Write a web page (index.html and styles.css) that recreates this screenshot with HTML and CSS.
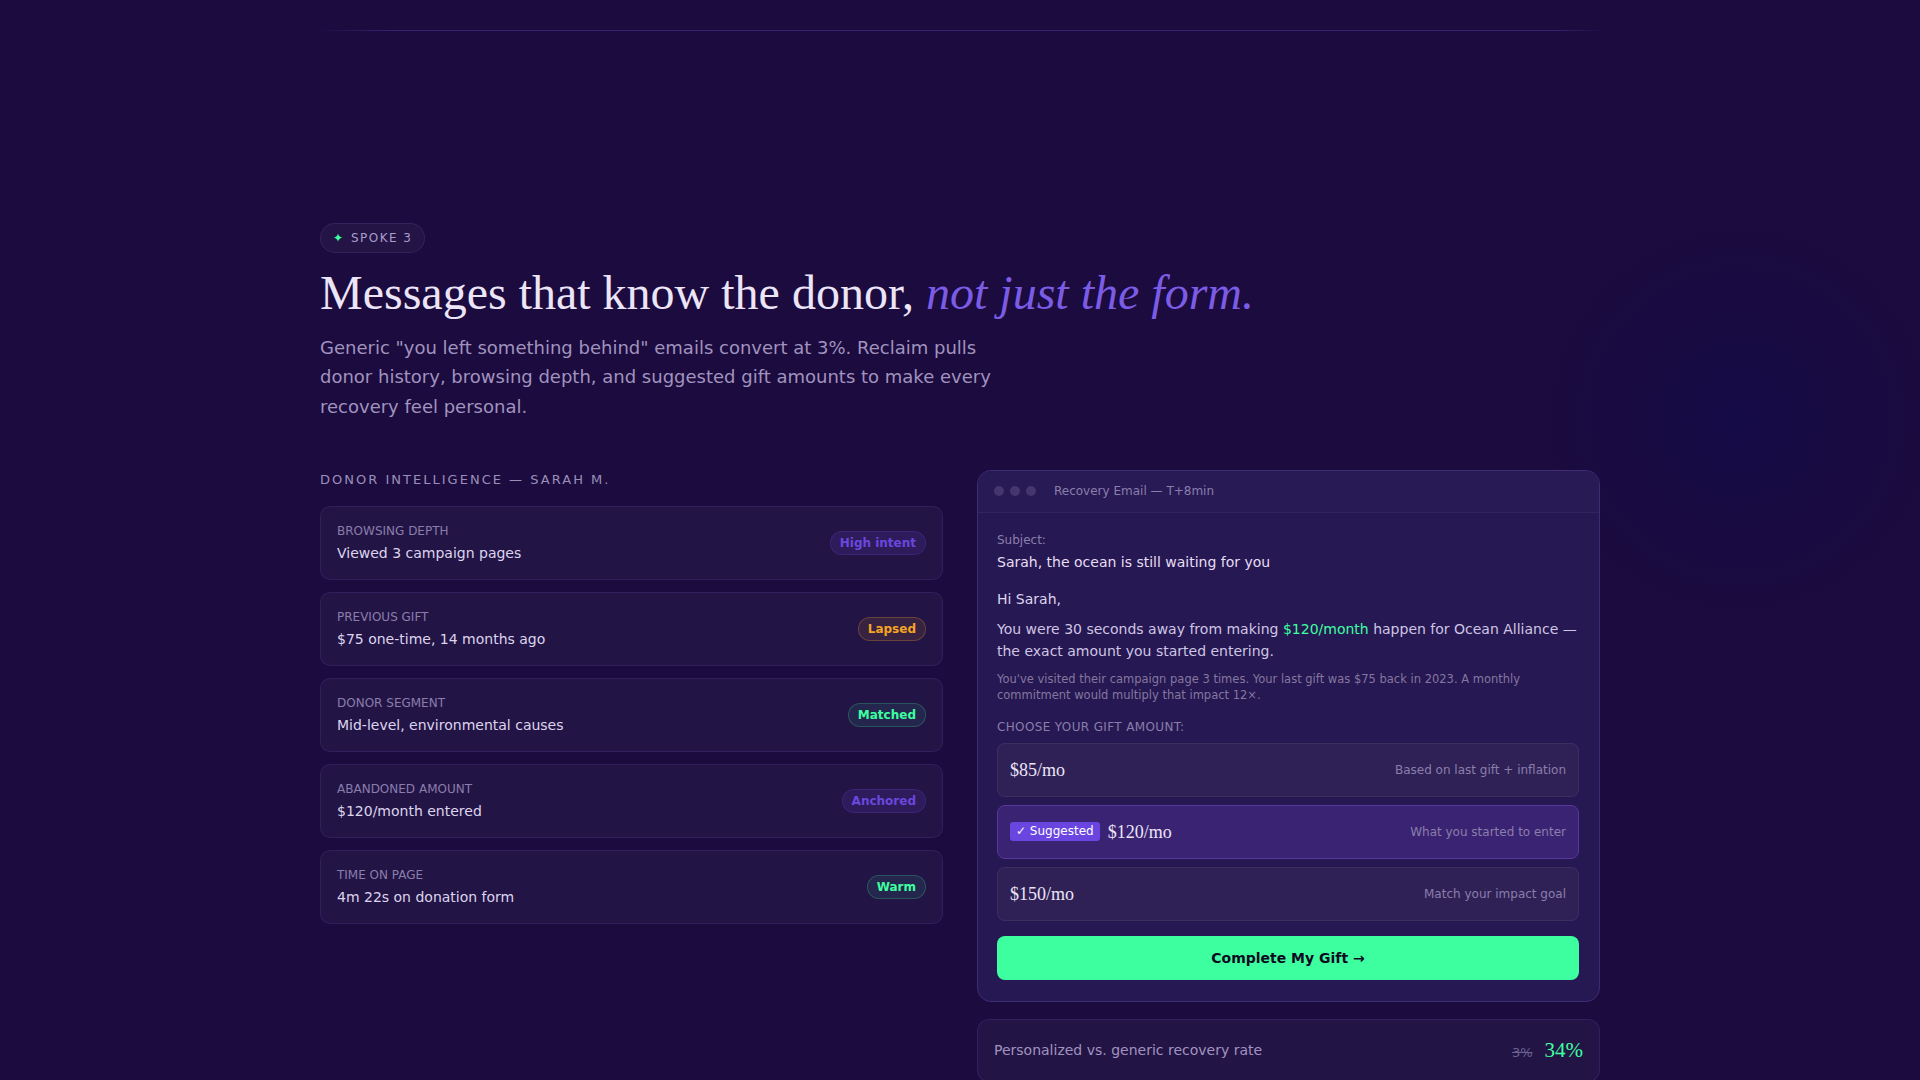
FILE: index.html
```html
<!DOCTYPE html>
<html lang="en">
<head>
    <meta charset="UTF-8">
    <meta name="viewport" content="width=device-width, initial-scale=1.0">
    <title>Spoke 3 - Personalized Recovery</title>
    <link rel="stylesheet" href="styles.css">
</head>
<body>
    <div class="top-rule"></div>

    <section class="spoke">
        <span class="eyebrow"><span class="spark">&#10022;</span> SPOKE 3</span>
        <h1>Messages that know the donor, <em>not just the form.</em></h1>
        <p class="lede">Generic "you left something behind" emails convert at 3%. Reclaim pulls donor history, browsing depth, and suggested gift amounts to make every recovery feel personal.</p>

        <div class="split">
            <div class="intel">
                <h2 class="intel-title">Donor Intelligence &mdash; Sarah M.</h2>

                <div class="signal">
                    <div>
                        <div class="signal-label">Browsing depth</div>
                        <div class="signal-value">Viewed 3 campaign pages</div>
                    </div>
                    <span class="tag tag-purple">High intent</span>
                </div>
                <div class="signal">
                    <div>
                        <div class="signal-label">Previous gift</div>
                        <div class="signal-value">$75 one-time, 14 months ago</div>
                    </div>
                    <span class="tag tag-amber">Lapsed</span>
                </div>
                <div class="signal">
                    <div>
                        <div class="signal-label">Donor segment</div>
                        <div class="signal-value">Mid-level, environmental causes</div>
                    </div>
                    <span class="tag tag-green">Matched</span>
                </div>
                <div class="signal">
                    <div>
                        <div class="signal-label">Abandoned amount</div>
                        <div class="signal-value">$120/month entered</div>
                    </div>
                    <span class="tag tag-purple">Anchored</span>
                </div>
                <div class="signal">
                    <div>
                        <div class="signal-label">Time on page</div>
                        <div class="signal-value">4m 22s on donation form</div>
                    </div>
                    <span class="tag tag-green">Warm</span>
                </div>
            </div>

            <div class="preview">
                <div class="email">
                    <div class="email-bar">
                        <span class="dot"></span>
                        <span class="dot"></span>
                        <span class="dot"></span>
                        <span class="email-title">Recovery Email &mdash; T+8min</span>
                    </div>
                    <div class="email-body">
                        <div class="subject-label">Subject:</div>
                        <div class="subject">Sarah, the ocean is still waiting for you</div>
                        <p class="greeting">Hi Sarah,</p>
                        <p class="copy">You were 30 seconds away from making <span class="hl">$120/month</span> happen for Ocean Alliance &mdash; the exact amount you started entering.</p>
                        <p class="fine">You've visited their campaign page 3 times. Your last gift was $75 back in 2023. A monthly commitment would multiply that impact 12&times;.</p>
                        <div class="choose">Choose your gift amount:</div>

                        <div class="amounts">
                            <div class="amount">
                                <span class="amount-value">$85/mo</span>
                                <span class="amount-note">Based on last gift + inflation</span>
                            </div>
                            <div class="amount amount-picked">
                                <span class="amount-value"><span class="suggested">&#10003; Suggested</span>$120/mo</span>
                                <span class="amount-note">What you started to enter</span>
                            </div>
                            <div class="amount">
                                <span class="amount-value">$150/mo</span>
                                <span class="amount-note">Match your impact goal</span>
                            </div>
                        </div>

                        <button class="cta">Complete My Gift &rarr;</button>
                    </div>
                </div>

                <div class="lift">
                    <span class="lift-label">Personalized vs. generic recovery rate</span>
                    <span class="lift-nums"><s class="old">3%</s><span class="new">34%</span></span>
                </div>
            </div>
        </div>
    </section>
</body>
</html>
```

FILE: styles.css
```css
body {
    margin: 0;
    background-color: #1b0b3e;
    background-image: radial-gradient(circle 200px at 1740px 420px, rgba(16, 12, 80, 0.5), rgba(16, 12, 80, 0) 100%);
    background-repeat: no-repeat;
    font-family: "DejaVu Sans", sans-serif;
    color: #e8e0f5;
    min-height: 1200px;
}
.top-rule {
    max-width: 1290px;
    height: 1px;
    margin: 30px auto 0;
    background: linear-gradient(90deg, rgba(80, 50, 160, 0), rgba(80, 50, 160, 0.55) 6%, rgba(80, 50, 160, 0.55) 96%, rgba(80, 50, 160, 0));
}
.spoke {
    max-width: 1280px;
    margin: 0 auto;
    padding: 192px 0 80px;
}
.eyebrow {
    display: inline-flex;
    align-items: center;
    gap: 8px;
    height: 28px;
    padding: 0 12px;
    border: 1px solid rgba(150, 120, 230, 0.14);
    border-radius: 999px;
    background: rgba(255, 255, 255, 0.04);
    color: #a99dc9;
    font-size: 12px;
    letter-spacing: 0.12em;
}
.spark {
    color: #3dffa0;
    font-size: 12px;
    letter-spacing: 0;
}
h1 {
    margin: 12px 0 13px;
    font-family: "Liberation Serif", serif;
    font-weight: 400;
    font-size: 48px;
    line-height: 1.15;
    color: #ece4f7;
}
h1 em {
    color: #7b5ce6;
}
.lede {
    max-width: 700px;
    margin: 0 0 49px;
    font-size: 18px;
    line-height: 1.62;
    color: #a193bf;
}
.split {
    display: grid;
    grid-template-columns: 1fr 1fr;
    gap: 34px;
    align-items: start;
}
.intel-title {
    margin: 0 0 16px;
    font-size: 13px;
    font-weight: 400;
    line-height: 20px;
    letter-spacing: 0.155em;
    text-transform: uppercase;
    color: #9b8fba;
}
.signal {
    display: flex;
    align-items: center;
    justify-content: space-between;
    padding: 16px 16px;
    margin-bottom: 12px;
    border: 1px solid rgba(130, 100, 220, 0.14);
    border-radius: 10px;
    background: #231446;
}
.signal-label {
    font-size: 12px;
    line-height: 16px;
    text-transform: uppercase;
    color: #8a7eab;
    margin-bottom: 4px;
}
.signal-value {
    font-size: 14px;
    line-height: 20px;
    color: #ddd4ee;
}
.tag {
    padding: 4px 9px;
    border-radius: 999px;
    font-size: 12px;
    font-weight: bold;
    line-height: 14px;
}
.tag-purple {
    color: #6b47de;
    background: rgba(107, 71, 222, 0.14);
    border: 1px solid rgba(107, 71, 222, 0.22);
}
.tag-amber {
    color: #f5a524;
    background: rgba(245, 165, 36, 0.1);
    border: 1px solid rgba(245, 165, 36, 0.25);
}
.tag-green {
    color: #3dffa0;
    background: rgba(61, 255, 160, 0.08);
    border: 1px solid rgba(61, 255, 160, 0.22);
}
.email {
    border: 1px solid #3d2c74;
    border-radius: 14px;
    background: #261852;
    overflow: hidden;
}
.email-bar {
    display: flex;
    align-items: center;
    gap: 6px;
    height: 41px;
    padding: 0 16px;
    border-bottom: 1px solid rgba(255, 255, 255, 0.05);
    background: #281a55;
}
.dot {
    width: 10px;
    height: 10px;
    border-radius: 50%;
    background: #453670;
}
.email-title {
    margin-left: 12px;
    font-size: 12px;
    color: #8a7eab;
}
.email-body {
    padding: 18px 20px 21px 19px;
}
.subject-label {
    font-size: 12px;
    line-height: 18px;
    color: #8a7eab;
    margin-bottom: 3px;
}
.subject {
    font-size: 14px;
    line-height: 20px;
    color: #e6def3;
}
.greeting {
    margin: 17px 0 9px;
    font-size: 14px;
    line-height: 20px;
    color: #ddd4ee;
}
.copy {
    margin: 0 0 9px;
    font-size: 14px;
    line-height: 22px;
    color: #cfc5e4;
}
.hl {
    color: #3dffa0;
}
.fine {
    margin: 0 0 16px;
    font-size: 11.5px;
    line-height: 16px;
    color: #84779f;
}
.choose {
    font-size: 12px;
    line-height: 16px;
    text-transform: uppercase;
    letter-spacing: 0.03em;
    color: #8a7eab;
    margin-bottom: 8px;
}
.amounts {
    display: flex;
    flex-direction: column;
    gap: 8px;
}
.amount {
    display: flex;
    align-items: center;
    justify-content: space-between;
    padding: 15px 12px;
    border: 1px solid rgba(255, 255, 255, 0.06);
    border-radius: 8px;
    background: #2f2156;
}
.amount-picked {
    background: #3a2372;
    border-color: #55399f;
}
.amount-value {
    display: flex;
    align-items: center;
    font-family: "Liberation Serif", serif;
    font-size: 18px;
    line-height: 22px;
    color: #ece4f7;
}
.suggested {
    margin-right: 8px;
    padding: 2px 6px;
    border-radius: 3px;
    background: #6a45e0;
    color: #fff;
    font-family: "DejaVu Sans", sans-serif;
    font-size: 12px;
    line-height: 15px;
}
.amount-note {
    font-size: 12px;
    color: #8a7eab;
}
.cta {
    display: block;
    width: 100%;
    height: 44px;
    margin-top: 15px;
    border: 0;
    border-radius: 8px;
    background: #3dffa0;
    color: #0e0a22;
    font-family: "DejaVu Sans", sans-serif;
    font-size: 14px;
    font-weight: bold;
    cursor: pointer;
}
.lift {
    display: flex;
    align-items: center;
    justify-content: space-between;
    margin-top: 17px;
    padding: 18px 16px;
    border: 1px solid rgba(130, 100, 220, 0.16);
    border-radius: 12px;
    background: #231446;
}
.lift-label {
    font-size: 14px;
    color: #a193bf;
}
.lift-nums {
    display: flex;
    align-items: baseline;
    gap: 12px;
}
.old {
    font-size: 13px;
    color: #6e6191;
}
.new {
    font-family: "Liberation Serif", serif;
    font-size: 21px;
    color: #3dffa0;
}
```
